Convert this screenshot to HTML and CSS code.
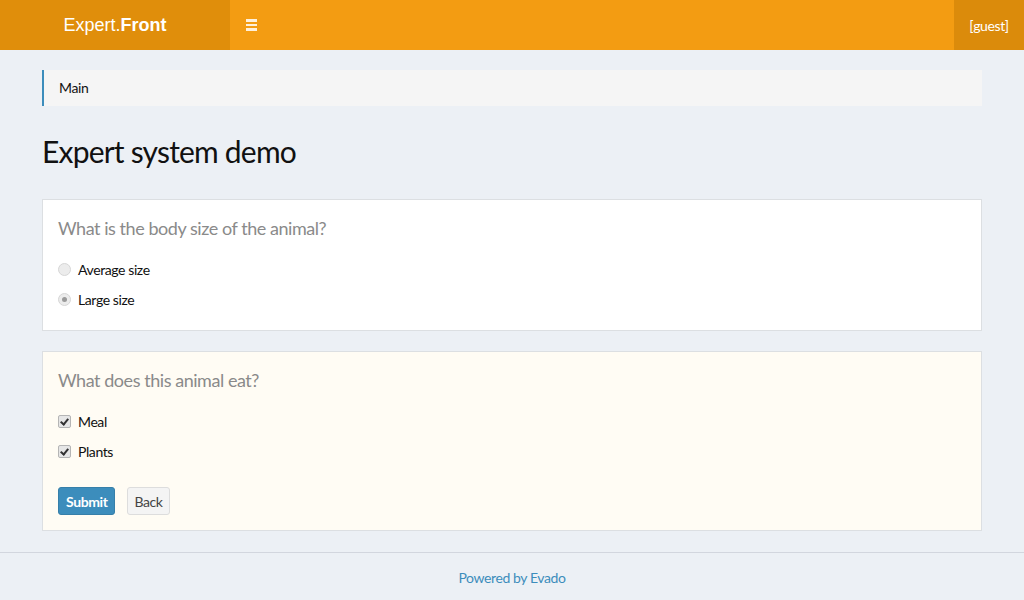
FILE: index.html
```html
<!DOCTYPE html>
<html lang="en">
<head>
<meta charset="utf-8">
<title>Expert system demo</title>
<link rel="stylesheet" href="styles.css">
</head>
<body>
<header class="navbar">
  <a class="logo">Expert.<b>Front</b></a>
  <div class="nav-main">
    <span class="toggle"><span></span><span></span><span></span></span>
  </div>
  <div class="user">[guest]</div>
</header>
<main class="content">
  <div class="breadcrumb">Main</div>
  <h1 class="title">Expert system demo</h1>
  <section class="panel">
    <h3 class="question">What is the body size of the animal?</h3>
    <label class="option"><span class="radio"></span>Average size</label>
    <label class="option"><span class="radio checked"></span>Large size</label>
  </section>
  <section class="panel active">
    <h3 class="question">What does this animal eat?</h3>
    <label class="option"><span class="check"></span>Meal</label>
    <label class="option"><span class="check"></span>Plants</label>
    <div class="actions">
      <button class="btn primary">Submit</button>
      <button class="btn">Back</button>
    </div>
  </section>
</main>
<footer class="footer"><a>Powered by Evado</a></footer>
</body>
</html>
```
FILE: styles.css
```css
html, body { margin: 0; padding: 0; }
body {
  background: #ecf0f5;
  font-family: "Source Sans Pro", Lato, "Open Sans", sans-serif;
  font-size: 14px;
  letter-spacing: -0.4px;
  color: #111;
  height: 600px;
  display: flex;
  flex-direction: column;
}
.navbar {
  height: 50px;
  display: flex;
  background: #f39c12;
  color: #fff;
}
.logo {
  width: 230px;
  background: #e08e0b;
  display: flex;
  align-items: center;
  justify-content: center;
  font-family: "Liberation Sans", Arial, sans-serif;
  font-size: 18px;
  letter-spacing: 0;
  color: #fff;
  padding-left: 0;
  box-sizing: border-box;
}
.logo b { font-weight: bold; }
.nav-main { flex: 1; display: flex; align-items: center; }
.toggle {
  margin-left: 16px;
  width: 11px;
  display: flex;
  flex-direction: column;
  gap: 2px;
}
.toggle span { height: 2.4px; background: rgba(255,255,255,0.85); }
.user {
  width: 70px;
  background: #db8b0b;
  display: flex;
  align-items: center;
  justify-content: center;
  font-size: 14px;
}
.content {
  flex: 1;
  padding: 20px 42px 0 42px;
}
.breadcrumb {
  background: #f5f5f5;
  border-left: 2px solid #3c8dbc;
  height: 36px;
  line-height: 36px;
  padding-left: 15px;
  font-size: 14px;
}
.title {
  margin: 27px 0 30px 0;
  font-weight: normal;
  font-size: 30px;
  letter-spacing: -0.8px;
  line-height: 36px;
  color: #111;
}
.panel {
  background: #fff;
  border: 1px solid #dcdfe2;
  padding: 16px 15px 11px 15px;
  margin-bottom: 20px;
}
.panel.active { background: #fffcf4; }
.question {
  margin: 0 0 19px 0;
  font-weight: normal;
  font-size: 18px;
  letter-spacing: -0.45px;
  line-height: 24px;
  color: #8a8a8a;
}
.option {
  display: flex;
  align-items: center;
  height: 20px;
  margin-bottom: 10px;
  font-size: 14px;
}
.radio {
  width: 11px;
  height: 11px;
  border-radius: 50%;
  border: 1px solid #d6d6d6;
  background: #ececec;
  margin-right: 7px;
  display: flex;
  align-items: center;
  justify-content: center;
}
.radio.checked::after {
  content: "";
  width: 5px;
  height: 5px;
  border-radius: 50%;
  background: #9a9a9a;
}
.check {
  width: 11px;
  height: 11px;
  border: 1px solid #b5b5b5;
  border-radius: 2px;
  background: #e6e6e6;
  margin-right: 7px;
  position: relative;
}
.check::after {
  content: "";
  position: absolute;
  left: 3px;
  top: 1px;
  width: 3px;
  height: 6px;
  border: solid #333;
  border-width: 0 2px 2px 0;
  transform: rotate(40deg);
}
.actions { display: flex; gap: 12px; margin-top: 26px; margin-bottom: 4px; }
.btn {
  font-family: inherit;
  font-size: 14px;
  letter-spacing: -0.4px;
  height: 28px;
  padding: 0 6px;
  border: 1px solid #ddd;
  border-radius: 3px;
  background: #f4f4f4;
  color: #444;
}
.btn.primary {
  padding: 0 7px;
  background: #3c8dbc;
  border-color: #367fa9;
  color: #fff;
  font-weight: bold;
}
.footer {
  border-top: 1px solid #d2d6de;
  height: 48px;
  display: flex;
  align-items: center;
  justify-content: center;
  font-size: 14px;
  padding-top: 1px;
  box-sizing: border-box;
}
.footer a { color: #3c8dbc; }
```
